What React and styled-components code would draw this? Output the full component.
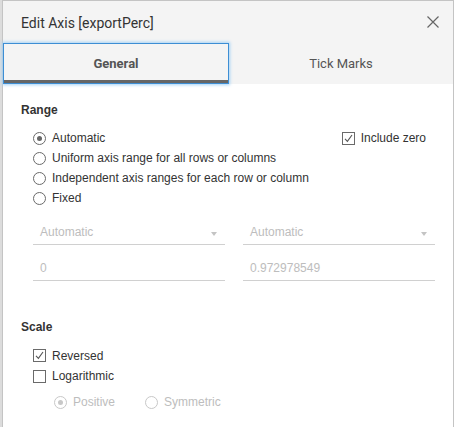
import React from "react";
import styled, { createGlobalStyle } from "styled-components";

const Global = createGlobalStyle`
  html, body { margin: 0; padding: 0; }
  body {
    background: #dcdcdc;
    font-family: "Liberation Sans", Arial, sans-serif;
    overflow: hidden;
  }
`;

const Dialog = styled.div`
  margin-left: 2px;
  width: 450px;
  height: 440px;
  border: 1px solid #c4c4c4;
  background: #fff;
  display: flex;
  flex-direction: column;
`;

const Header = styled.div`
  background: #f4f4f4;
  height: 42px;
  display: flex;
  align-items: center;
  justify-content: space-between;
  padding: 0 13px 0 18px;
  box-sizing: border-box;
`;

const Title = styled.div`
  font-family: Roboto, "Liberation Sans", sans-serif;
  font-size: 14px;
  color: #333;
  padding-top: 2px;
`;

const Close = styled.button`
  border: 0;
  background: transparent;
  padding: 0;
  width: 14px;
  height: 14px;
  display: flex;
  align-items: center;
  justify-content: center;
  cursor: pointer;
`;

const Tabs = styled.div`
  background: #f4f4f4;
  height: 41px;
  display: grid;
  grid-template-columns: 226px 1fr;
`;

const Tab = styled.div`
  display: flex;
  align-items: center;
  justify-content: center;
  box-sizing: border-box;
  font-family: Roboto, "Liberation Sans", sans-serif;
  font-size: 13px;
  color: #555;
  font-weight: ${(p) => (p.$active ? 700 : 400)};
  border: 1px solid ${(p) => (p.$active ? "#3d8ed4" : "transparent")};
  box-shadow: ${(p) => (p.$active ? "0 0 3px 1px #a6d2f5" : "none")};
  position: relative;
  padding-bottom: ${(p) => (p.$active ? "1px" : "0")};
  &::after {
    content: "";
    position: absolute;
    left: 0;
    right: 0;
    bottom: 0;
    height: 3px;
    background: ${(p) => (p.$active ? "#666" : "transparent")};
  }
`;

const Body = styled.div`
  padding: 19px 18px 0 18px;
  display: flex;
  flex-direction: column;
`;

const SectionTitle = styled.div`
  font-size: 12px;
  font-weight: 700;
  color: #333;
  height: 14px;
  line-height: 14px;
  margin-top: ${(p) => p.$mt || 0}px;
`;

const OptionsBlock = styled.div`
  margin-top: 11px;
  padding-left: 12px;
  display: flex;
  justify-content: space-between;
  padding-right: 9px;
`;

const List = styled.div`
  display: flex;
  flex-direction: column;
`;

const Option = styled.label`
  display: flex;
  align-items: center;
  height: ${(p) => p.$h || 20}px;
  font-size: 12px;
  color: ${(p) => (p.$disabled ? "#bdbdbd" : "#333")};
  gap: 6px;
  margin-right: ${(p) => p.$mr || 0}px;
`;

const RadioCircle = styled.span`
  width: 13px;
  height: 13px;
  box-sizing: border-box;
  border-radius: 50%;
  border: 1px solid ${(p) => (p.$disabled ? "#c8c8c8" : "#6a6a6a")};
  display: flex;
  align-items: center;
  justify-content: center;
  flex: none;
  &::after {
    content: "";
    width: 5px;
    height: 5px;
    border-radius: 50%;
    background: ${(p) =>
      p.$checked ? (p.$disabled ? "#c8c8c8" : "#666") : "transparent"};
  }
`;

const CheckBox = styled.span`
  width: 13px;
  height: 13px;
  box-sizing: border-box;
  border: 1px solid #6a6a6a;
  display: flex;
  align-items: center;
  justify-content: center;
  flex: none;
`;

const Fields = styled.div`
  margin-top: 13px;
  padding-left: 12px;
  display: grid;
  grid-template-columns: 192px 192px;
  column-gap: 18px;
  row-gap: 12px;
`;

const Field = styled.div`
  height: 24px;
  box-sizing: border-box;
  border-bottom: 1px solid #d0d0d0;
  display: flex;
  align-items: center;
  justify-content: space-between;
  padding: 0 7px 1px 7px;
  font-size: 12px;
  color: #bdbdbd;
`;

const Arrow = styled.span`
  width: 0;
  height: 0;
  border-left: 3px solid transparent;
  border-right: 3px solid transparent;
  border-top: 4px solid #c4c4c4;
  margin-top: 3px;
  margin-right: 1px;
`;

const ScaleList = styled.div`
  margin-top: 11px;
  padding-left: 12px;
  display: flex;
  flex-direction: column;
`;

const SubOptions = styled.div`
  display: flex;
  padding-left: 21px;
  margin-top: 6px;
`;

const Check = () => (
  <svg width="11" height="11" viewBox="0 0 11 11">
    <path d="M2 5.8 L4.4 8.4 L9 2" fill="none" stroke="#555" strokeWidth="1.1" />
  </svg>
);

const Radio = ({ label, checked, disabled, mr }) => (
  <Option $disabled={disabled} $mr={mr}>
    <RadioCircle $checked={checked} $disabled={disabled} />
    {label}
  </Option>
);

const Checkbox = ({ label, checked, h }) => (
  <Option $h={h}>
    <CheckBox>{checked && <Check />}</CheckBox>
    {label}
  </Option>
);

export default function App() {
  return (
    <>
      <Global />
      <Dialog>
        <Header>
          <Title>Edit Axis [exportPerc]</Title>
          <Close aria-label="Close">
            <svg width="12" height="12" viewBox="0 0 12 12">
              <path d="M0.5 0.5 L11.5 11.5 M11.5 0.5 L0.5 11.5" stroke="#666" strokeWidth="1.2" />
            </svg>
          </Close>
        </Header>
        <Tabs>
          <Tab $active>General</Tab>
          <Tab>Tick Marks</Tab>
        </Tabs>
        <Body>
          <SectionTitle>Range</SectionTitle>
          <OptionsBlock>
            <List>
              <Radio label="Automatic" checked />
              <Radio label="Uniform axis range for all rows or columns" />
              <Radio label="Independent axis ranges for each row or column" />
              <Radio label="Fixed" />
            </List>
            <List>
              <Checkbox label="Include zero" checked />
            </List>
          </OptionsBlock>
          <Fields>
            <Field>
              Automatic
              <Arrow />
            </Field>
            <Field>
              Automatic
              <Arrow />
            </Field>
            <Field>0</Field>
            <Field>0.972978549</Field>
          </Fields>
          <SectionTitle $mt={39}>Scale</SectionTitle>
          <ScaleList>
            <Checkbox label="Reversed" checked h={21} />
            <Checkbox label="Logarithmic" h={20} />
            <SubOptions>
              <Radio label="Positive" checked disabled mr={30} />
              <Radio label="Symmetric" disabled />
            </SubOptions>
          </ScaleList>
        </Body>
      </Dialog>
    </>
  );
}
